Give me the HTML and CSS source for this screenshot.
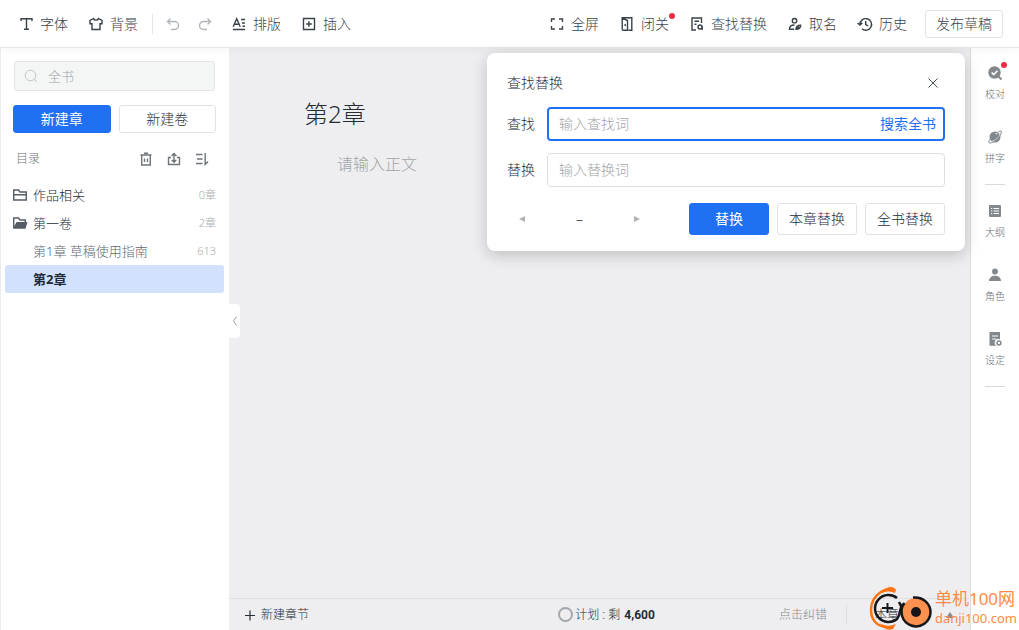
FILE: index.html
```html
<!DOCTYPE html>
<html lang="zh-CN">
<head>
<meta charset="utf-8">
<meta name="viewport" content="width=device-width, initial-scale=1">
<title>第2章</title>
<link rel="stylesheet" href="styles.css">
</head>
<body>
<div class="app">
  <header class="topbar">
    <div class="tools">
      <button class="tool"><svg class="icon" viewBox="0 0 14 14"><path d="M2 4V1.700h11V4M7.500 2v10.500M5 12.300h5"/></svg>字体</button>
      <button class="tool"><svg class="icon" viewBox="0 0 14 14"><path d="M4.500 1.500 1 3.500v3.300h2v5.700h8V6.800h2V3.500l-3.500-2C9 3.700 5 3.700 4.500 1.500z"/></svg>背景</button>
    </div>
    <div class="history">
      <button class="tool faded" aria-label="撤销"><svg class="icon" viewBox="0 0 14 14"><path d="M4.500 1.500 1.500 4.500l3 3M1.500 4.500h7a4 4 0 0 1 0 8H5"/></svg></button>
      <button class="tool faded" aria-label="重做"><svg class="icon" viewBox="0 0 14 14"><path d="m9.500 1.500 3 3-3 3M12.500 4.500h-7a4 4 0 0 0 0 8H9"/></svg></button>
    </div>
    <div class="tools">
      <button class="tool"><svg class="icon" viewBox="0 0 14 14"><path d="M1.200 9.700 4.700 1.800l3.500 7.900M2.500 7.200H7M1 12.500h12M9 2.500h4M10 6h3M10.500 9.300H13"/></svg>排版</button>
      <button class="tool"><svg class="icon" viewBox="0 0 14 14"><path d="M1.500 1.500h11v11h-11zM7 4.200v5.600M4.200 7h5.600"/></svg>插入</button>
    </div>
    <div class="tools end">
      <button class="tool"><svg class="icon" viewBox="0 0 14 14"><path d="M1.500 5V2H5M9 2h3.500v3M12.500 9v3H9M5 12H1.500V9"/></svg>全屏</button>
      <button class="tool"><svg class="icon" viewBox="0 0 14 14"><path d="M2.200 12.800V.7h9.600v12.600H8.500M2.200 1l5.300 2.500v9.800H2.200M5.200 7v2"/></svg>闭关<i class="dot"></i></button>
      <button class="tool"><svg class="icon" viewBox="0 0 14 14"><path d="M11.500 6V1H2v12h4M4.500 4.200h4.500M4.500 7.300h2"/><circle cx="10" cy="10" r="2"/><path d="M12.200 9.500V13"/></svg>查找替换</button>
      <button class="tool"><svg class="icon" viewBox="0 0 14 14"><circle cx="6.500" cy="3.700" r="2.200"/><path d="M6.500 8C3.500 8 1.500 9.300 1.500 12.300h4.700M8 12.300c0-2.500 1.500-4 4.700-4 0 2.700-1.700 4-4.700 4zl3-2.500"/></svg>取名</button>
      <button class="tool"><svg class="icon" viewBox="0 0 14 14"><path d="M2 7.500a5.800 5.800 0 1 1 2 4.300M-.5 6 2 8l2.300-2.300M7.700 4v3.500l2.500 1.300"/></svg>历史</button>
    </div>
    <button class="btn publish">发布草稿</button>
  </header>

  <aside class="sidebar">
    <label class="search"><svg class="icon" viewBox="0 0 14 14"><circle cx="6.500" cy="6.500" r="5.300"/><path d="m10.500 10.500 2.500 2.500"/></svg><input type="text" placeholder="全书" aria-label="搜索全书"></label>
    <div class="create"><button class="btn primary">新建章</button><button class="btn">新建卷</button></div>
    <div class="dir-head">
      <span class="dir-title">目录</span>
      <button class="tool small" aria-label="回收站"><svg class="icon" viewBox="0 0 14 14"><path d="M1.500 3h11M5 1.200h4M2.700 3v10h8.600V3M5.500 6.500v3.500M8.500 6.500v3.500"/></svg></button>
      <button class="tool small" aria-label="导出"><svg class="icon" viewBox="0 0 14 14"><path d="M4 5.500H1.500v7h11v-7H10M7 10V2M4.500 4 7 1.500 9.500 4M4.800 8 7 10.200 9.200 8"/></svg></button>
      <button class="tool small" aria-label="排序"><svg class="icon" viewBox="0 0 14 14"><path d="M1 2.500h6.500M2 7h5.500M1 11.500h6.500M10.200 1v11.500L13 9.500"/></svg></button>
    </div>
    <nav class="tree">
      <a class="node" href="#related"><svg class="icon" viewBox="0 0 14 14"><path d="M.7 12V2h4.800L7 4h6.300v8zM.7 6.800h12.600"/></svg><span class="name">作品相关</span><span class="count">0章</span></a>
      <a class="node" href="#volume"><svg class="icon" viewBox="0 0 14 14"><path d="M.7 12V2h4.800L7 4h5.300v2"/><path class="solid" d="M3.500 6H14.500l-2 6.700H0z"/></svg><span class="name">第一卷</span><span class="count">2章</span></a>
      <a class="node child" href="#c1"><span class="name">第1章 草稿使用指南</span><span class="count">613</span></a>
      <a class="node child current" href="#c2" aria-current="page"><span class="name">第2章</span></a>
    </nav>
    <button class="collapse" aria-label="收起目录"><svg viewBox="0 0 6 10"><path d="M4.500.5 1.500 5l3 4.500"/></svg></button>
  </aside>

  <main class="editor">
    <div class="page">
      <input class="chapter-title" type="text" value="第2章" aria-label="章节名">
      <textarea class="chapter-body" placeholder="请输入正文" aria-label="正文"></textarea>
    </div>
    <footer class="status">
      <button class="tool add"><svg class="icon" viewBox="0 0 14 14"><path d="M7 2.500v10M2 7.500h10"/></svg>新建章节</button>
      <div class="plan"><i class="ring"></i><span>计划 : 剩</span><b>4,600</b></div>
      <div class="status-end"><button class="tool report">点击纠错</button><button class="tool words">本章<span class="caret"></span></button></div>
    </footer>
  </main>

  <aside class="rail">
    <button class="rail-item"><svg class="glyph" viewBox="0 0 14 14"><circle class="fill" cx="6.500" cy="6.500" r="6.200"/><path class="dark" d="m10.500 10.500 3 3"/><path class="light" d="m3.700 6.500 2 2 3.800-3.800"/></svg>校对<i class="dot"></i></button>
    <button class="rail-item"><svg class="glyph" viewBox="0 0 14 14"><circle class="fill" cx="7" cy="7" r="5.500"/><path class="light thin" d="M3.500 11.500C7.500 11 11 7.500 12 4M7.500 3.500l2 .5"/><path class="dark thin" d="M10.500 1.500C13 .2 14 1 13 3.500c-2 5-7 9-11 9.500-1.700 0-1.500-2 .3-4"/></svg>拼字</button>
    <hr class="rule">
    <button class="rail-item"><svg class="glyph" viewBox="0 0 14 14"><rect class="fill" x="1" y="1" width="12" height="12" rx="1"/><path class="light thin" d="M3 4.500h1.200M5.500 4.500H11M3 7h1.200M5.500 7H11M3 9.500h1.200M5.500 9.500H11"/></svg>大纲</button>
    <button class="rail-item"><svg class="glyph" viewBox="0 0 14 14"><circle class="fill" cx="7" cy="3.500" r="2.900"/><path class="fill" d="M1 13c0-7 12-7 12 0z"/></svg>角色</button>
    <button class="rail-item"><svg class="glyph" viewBox="0 0 14 14"><path class="fill" d="M1.500 0h10.500v7.500a3.500 3.500 0 0 0-3.500 6.200h-7z"/><path class="light thin" d="M4 4h6M4 7h4"/><circle class="ringed" cx="11" cy="11" r="1.900"/></svg>设定</button>
    <hr class="rule">
  </aside>

  <section class="dialog" role="dialog" aria-label="查找替换">
    <div class="dialog-head"><span>查找替换</span><button class="close" aria-label="关闭"><svg viewBox="0 0 12 12"><path d="m1.500 1.500 9 9M10.500 1.500l-9 9"/></svg></button></div>
    <div class="row"><label for="find">查找</label><div class="field active"><input id="find" type="text" placeholder="输入查找词"><button class="link">搜索全书</button></div></div>
    <div class="row"><label for="replace">替换</label><div class="field"><input id="replace" type="text" placeholder="输入替换词"></div></div>
    <div class="actions">
      <div class="pager"><button class="arrow prev" aria-label="上一个"></button><span>–</span><button class="arrow next" aria-label="下一个"></button></div>
      <button class="btn primary">替换</button><button class="btn">本章替换</button><button class="btn">全书替换</button>
    </div>
  </section>

  <div class="stamp">
    <svg class="stamp-logo" viewBox="0 0 66 46"><path class="o" d="M25 7.500C22 1 3 9 3 26c0 9 5 16 15 17"/><path class="o-tip" d="M14 8c4-5 11-7 14-2l-1 3c-4-2-8-2-13 0zM12 39c4 3 9 4 16 1l-3 5c-5 2-10 0-13-6z"/><path class="k" d="M29 14A13.500 13.500 0 1 0 29 35C34 29 30 25 35 20"/><path class="k plus" d="M14 24h11M19.500 19v10"/><path class="k" d="m31 18 3 6"/><circle class="disc" cx="48" cy="28" r="14"/><path class="k" d="M45 13.500c11-1 17.500 7 17.500 14.500A14.500 14.500 0 1 1 36.500 19"/><circle class="hub" cx="48" cy="28" r="5"/></svg>
    <div class="stamp-text"><span class="stamp-name">单机100网</span><span class="stamp-url">danji100.com</span></div>
  </div>
</div>
</body>
</html>
```
FILE: styles.css
```css
* { box-sizing: border-box; }
body {
  margin: 0;
  color: #242d36;
  font: 300 14px/20px "Noto Sans", "Noto Sans CJK SC", sans-serif;
}
button, input, textarea { font: inherit; color: inherit; }
button { padding: 0; border: 0; background: none; white-space: nowrap; }
input, textarea { min-width: 0; border: 0; outline: 0; padding: 0; background: none; }
a { color: inherit; text-decoration: none; }
svg { flex: none; fill: none; stroke: currentColor; overflow: visible; }

.app {
  position: relative;
  display: grid;
  grid-template: 48px 1fr / 229px 1fr 49px;
  height: 100vh;
}

/* top bar */
.topbar {
  z-index: 1;
  grid-column: 1 / -1;
  display: flex;
  align-items: center;
  padding: 0 16px 0 19px;
  border-bottom: 1px solid #e6e6e8;
  background: #fff;
  box-shadow: 0 2px 8px rgba(0, 0, 0, .04);
  color: #39424b;
}
.tools { display: flex; gap: 21px; }
.tools.end { margin-left: auto; }
.tool { position: relative; display: flex; align-items: center; gap: 7px; }
.icon { width: 14px; height: 14px; stroke-width: 1.4; }
.solid { fill: currentColor; stroke: none; }
.faded { color: #b1b5ba; }
.history {
  display: flex;
  gap: 18px;
  margin: 0 20px 0 14px;
  padding-left: 13px;
  border-left: 1px solid #e4e5e7;
  height: 20px;
}
.dot {
  position: absolute;
  top: -1px;
  right: -6px;
  width: 6px;
  height: 6px;
  border-radius: 50%;
  background: #f02b45;
}
.btn {
  flex: 1;
  height: 32px;
  border: 1px solid #e1e2e4;
  border-radius: 3px;
  background: #fff;
}
.btn.primary { border-color: #1f70f2; background: #1f70f2; color: #fff; font-weight: 400; }
.publish { flex: none; height: 28px; margin-left: 18px; padding: 0 10px; }

/* sidebar */
.sidebar {
  position: relative;
  padding: 13px 5px 0 4px;
  border-left: 1px solid #ececee;
  background: #fff;
}
.search {
  display: flex;
  align-items: center;
  gap: 10px;
  height: 30px;
  margin: 0 9px;
  padding: 0 9px;
  border: 1px solid #e2e5e5;
  border-radius: 3px;
  background: #f4f6f5;
  color: #c0c3c5;
}
.search input { flex: 1; font-size: 13px; }
.search .icon { stroke-width: 1; }
::placeholder { color: #a0a4a9; opacity: 1; }
.create { display: flex; gap: 8px; margin: 14px 8px 0; }
.create .btn { height: 28px; }
.dir-head {
  display: flex;
  align-items: center;
  gap: 14px;
  height: 20px;
  margin: 16px 15px 12px 11px;
  color: #6f7479;
  font-size: 12px;
}
.dir-title { flex: 1; }
.node {
  display: flex;
  align-items: center;
  gap: 6px;
  height: 28px;
  padding: 0 8px;
  border-radius: 3px;
  font-size: 13px;
}
.node .icon { color: #565d64; }
.node.child { padding-left: 28px; color: #62686e; }
.node.current { background: #d2e1fd; color: #222b35; font-weight: 700; }
.name { flex: 1; }
.count { color: #a9adb1; font-size: 11px; }
.collapse {
  position: absolute;
  z-index: 1;
  top: 256px;
  left: 100%;
  width: 11px;
  height: 34px;
  border-radius: 0 4px 4px 0;
  background: #fff;
  color: #a2a5a9;
}
.collapse svg { display: block; width: 6px; height: 10px; margin: auto; }

/* editor */
.editor { display: flex; flex-direction: column; min-width: 0; background: #eeeef0; }
.page { flex: 1; display: flex; flex-direction: column; padding: 44px 75px 0; }
.chapter-title { height: 40px; font-size: 24px; }
.chapter-body {
  flex: 1;
  margin: 20px 0 0 33px;
  font-size: 16px;
  line-height: 24px;
  resize: none;
}
.status {
  display: grid;
  grid-template-columns: 1fr auto 1fr;
  align-items: center;
  height: 32px;
  padding: 0 16px 0 14px;
  border-top: 1px solid #dddee1;
  font-size: 12px;
}
.add { gap: 4px; }
.add .icon { stroke-width: 1.2; }
.plan { display: flex; align-items: center; gap: 4px; padding-left: 16px; }
.ring { width: 15px; height: 15px; margin-right: -2px; border: 2px solid #a3a8ae; border-radius: 50%; }
.plan b { font: 700 12px/20px Roboto, sans-serif; }
.status-end { display: flex; justify-content: flex-end; }
.report { padding-right: 19px; border-right: 1px solid #dddee1; color: #85898e; }
.words { width: 107px; padding-left: 28px; justify-content: space-between; }
.caret { border: 4px solid transparent; border-top: 0; border-bottom: 6px solid #858a91; }

/* right rail */
.rail {
  display: flex;
  flex-direction: column;
  align-items: center;
  padding-top: 18px;
  border-left: 1px solid #dddee1;
  background: #fff;
  color: #6c7176;
}
.rail-item {
  position: relative;
  display: flex;
  flex-direction: column;
  align-items: center;
  gap: 6px;
  height: 36px;
  margin-bottom: 28px;
  font-size: 10px;
  line-height: 16px;
}
.rail-item .dot { top: -4px; right: -2px; }
.glyph { width: 14px; height: 14px; color: #82888c; }
.fill { fill: currentColor; stroke: none; }
.dark { stroke: currentColor; stroke-width: 2; }
.light { stroke: #fff; stroke-width: 1.6; }
.thin { stroke-width: 1; }
.ringed { stroke-width: 1.5; }
.rule { width: 20px; margin: -10px 0 19px; border: 0; border-top: 1px solid #d8dadc; }

/* find and replace */
.dialog {
  position: absolute;
  z-index: 2;
  top: 53px;
  right: 54px;
  width: 478px;
  padding: 18px 20px 16px;
  border-radius: 8px;
  background: #fff;
  box-shadow: 0 4px 16px rgba(0, 0, 0, .2);
}
.dialog-head { display: flex; justify-content: space-between; align-items: center; height: 24px; }
.close { width: 24px; height: 24px; color: #4a5158; }
.close svg { display: block; width: 12px; height: 12px; margin: auto; }
.row { display: flex; align-items: center; gap: 12px; margin-top: 12px; }
.field {
  flex: 1;
  display: flex;
  height: 34px;
  padding: 0 8px 0 11px;
  border: 1px solid #dedfe1;
  border-radius: 4px;
}
.field.active { padding: 0 7px 0 10px; border: 2px solid #1f70f2; }
.field input { flex: 1; }
.link { color: #1f70f2; font-weight: 400; }
.actions { display: flex; gap: 8px; margin-top: 16px; }
.actions .btn { flex: none; width: 80px; }
.pager { flex: 1; display: flex; justify-content: space-between; align-items: center; padding: 0 41px 0 12px; }
.arrow { width: 6px; height: 6px; background: #b0b3b6; }
.prev { clip-path: polygon(0 50%, 100% 0, 100% 100%); }
.next { clip-path: polygon(0 0, 100% 50%, 0 100%); }

/* site stamp */
.stamp {
  position: absolute;
  z-index: 3;
  right: 2px;
  bottom: 0;
  display: flex;
  align-items: center;
  gap: 1px;
  color: #ff8a48;
  pointer-events: none;
}
.stamp-logo { width: 66px; height: 46px; }
.stamp-text { display: flex; flex-direction: column; }
.stamp-name { font-size: 17px; line-height: 21px; font-weight: 400; }
.stamp-url { font: 13px/18px "Noto Sans", sans-serif; }
.o { stroke: #ff7415; stroke-width: 2.5; }
.o-tip { fill: #ff7415; stroke: none; }
.k { stroke: #171619; stroke-width: 2.5; }
.plus { stroke-width: 2; }
.disc { fill: #ff914e; stroke: none; }
.hub { fill: #171619; stroke: none; }
```
